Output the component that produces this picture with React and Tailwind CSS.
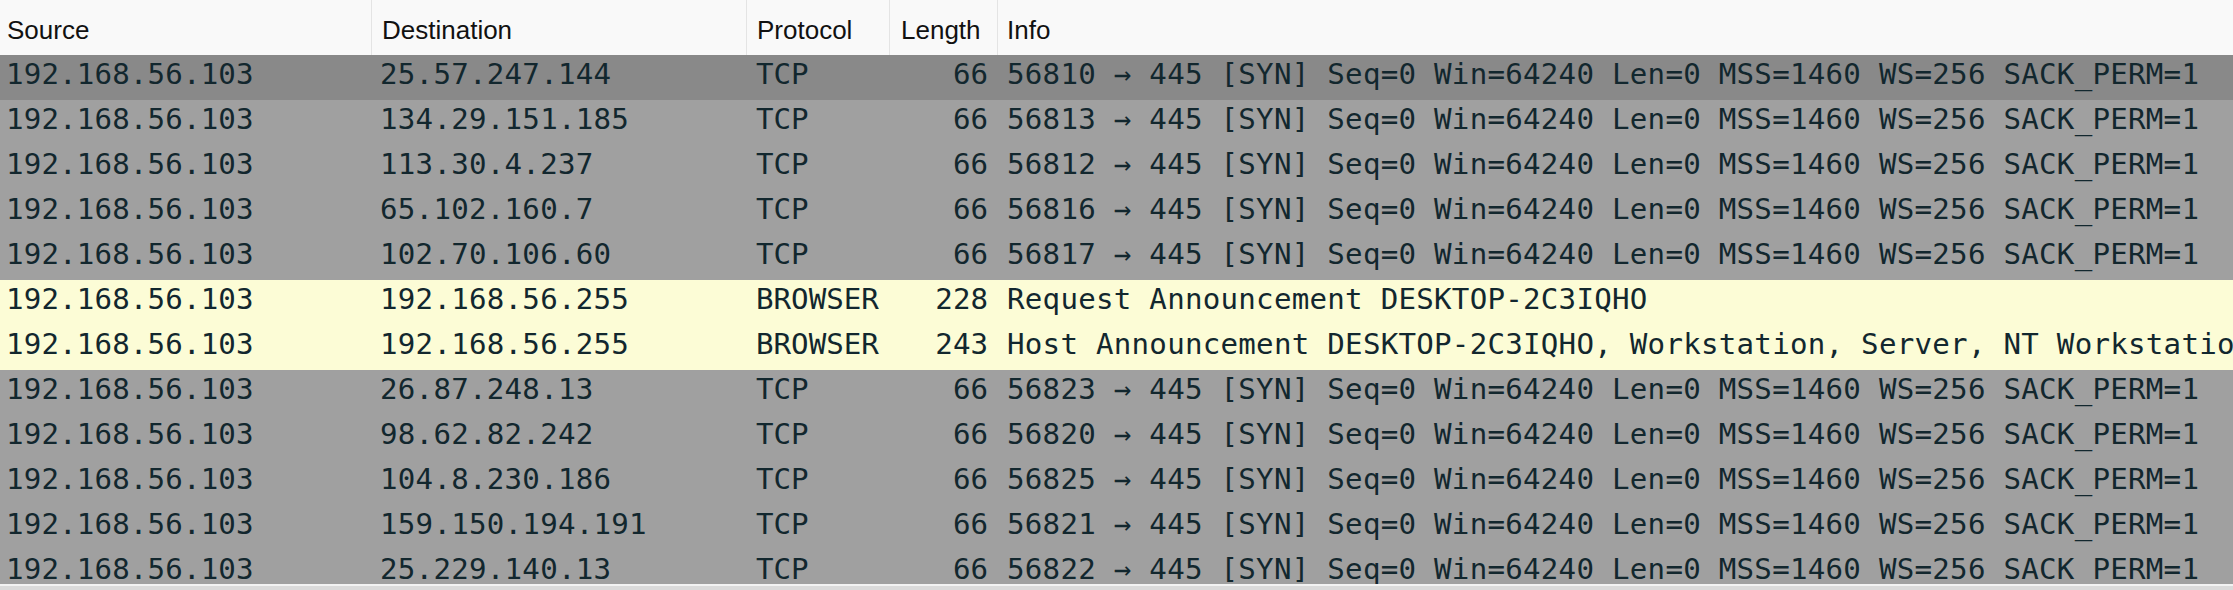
const packets = [
  { dst: '25.57.247.144', proto: 'TCP', len: 66, sport: 56810, selected: true },
  { dst: '134.29.151.185', proto: 'TCP', len: 66, sport: 56813 },
  { dst: '113.30.4.237', proto: 'TCP', len: 66, sport: 56812 },
  { dst: '65.102.160.7', proto: 'TCP', len: 66, sport: 56816 },
  { dst: '102.70.106.60', proto: 'TCP', len: 66, sport: 56817 },
  { dst: '192.168.56.255', proto: 'BROWSER', len: 228, info: 'Request Announcement DESKTOP-2C3IQHO' },
  {
    dst: '192.168.56.255',
    proto: 'BROWSER',
    len: 243,
    info: 'Host Announcement DESKTOP-2C3IQHO, Workstation, Server, NT Workstation, Potential Browser, Master Browser',
  },
  { dst: '26.87.248.13', proto: 'TCP', len: 66, sport: 56823 },
  { dst: '98.62.82.242', proto: 'TCP', len: 66, sport: 56820 },
  { dst: '104.8.230.186', proto: 'TCP', len: 66, sport: 56825 },
  { dst: '159.150.194.191', proto: 'TCP', len: 66, sport: 56821 },
  { dst: '25.229.140.13', proto: 'TCP', len: 66, sport: 56822 },
];

function synInfo(sport) {
  return `${sport} → 445 [SYN] Seq=0 Win=64240 Len=0 MSS=1460 WS=256 SACK_PERM=1`;
}

function rowBg(p) {
  if (p.selected) return 'bg-[#898989]';
  if (p.proto === 'BROWSER') return 'bg-[#fcfcd6]';
  return 'bg-[#a0a0a0]';
}

export default function App() {
  return (
    <div className="w-[2233px] h-[590px] overflow-hidden bg-white flex flex-col">
      {/* Column headers */}
      <div className="h-[55px] shrink-0 flex bg-[#f9f9f9] text-[26px] text-[#111] font-['Liberation_Sans',Arial,sans-serif]">
        <div className="w-[372px] shrink-0 flex items-center pl-[7px] pt-[5px] border-r border-[#e4e4e4]">Source</div>
        <div className="w-[375px] shrink-0 flex items-center pl-[10px] pt-[5px] border-r border-[#e4e4e4]">Destination</div>
        <div className="w-[143px] shrink-0 flex items-center pl-[10px] pt-[5px] border-r border-[#e4e4e4]">Protocol</div>
        <div className="w-[108px] shrink-0 flex items-center pl-[11px] pt-[5px] border-r border-[#e4e4e4]">Length</div>
        <div className="flex-1 flex items-center pl-[9px] pt-[5px]">Info</div>
      </div>

      {/* Packet list */}
      <div className="h-[529px] shrink-0 overflow-hidden text-[29.15px] text-[#12272e] font-['DejaVu_Sans_Mono',monospace]">
        {packets.map((p, i) => (
          <div key={i} className={`h-[45px] flex items-center pb-[6px] whitespace-nowrap ${rowBg(p)}`}>
            <div className="w-[372px] shrink-0 pl-[6px] leading-none tracking-[0.15px]">192.168.56.103</div>
            <div className="w-[375px] shrink-0 pl-[8px] leading-none tracking-[0.25px]">{p.dst}</div>
            <div className="w-[143px] shrink-0 pl-[9px] leading-none">{p.proto}</div>
            <div className="w-[108px] shrink-0 pr-[10px] text-right leading-none">{p.len}</div>
            <div className="pl-[9px] leading-none tracking-[0.25px]">{p.info || synInfo(p.sport)}</div>
          </div>
        ))}
      </div>

      <div className="flex-1 border-t-2 border-[#f2f2f2] bg-[#dadada]" />
    </div>
  );
}
